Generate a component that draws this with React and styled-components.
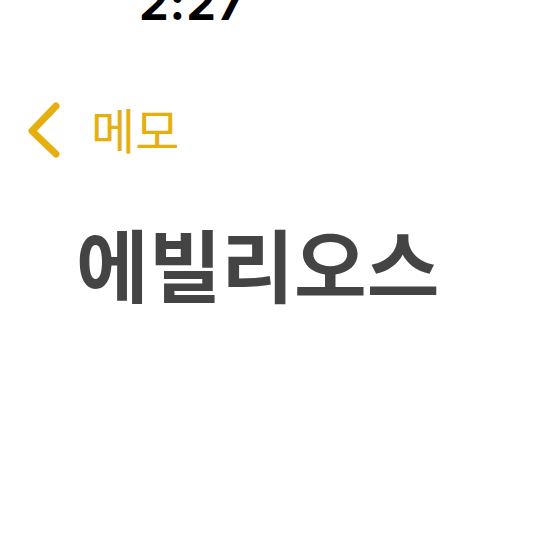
import React from 'react'
import styled, { createGlobalStyle } from 'styled-components'

const Global = createGlobalStyle`
  html, body {
    margin: 0;
    padding: 0;
    background: #fff;
  }
  body {
    font-family: "Noto Sans CJK KR", "Noto Sans", sans-serif;
  }
`

const Screen = styled.div`
  width: 536px;
  height: 536px;
  overflow: hidden;
  background: #fff;
  display: flex;
  flex-direction: column;
`

const StatusBar = styled.div`
  height: 30px;
  display: flex;
  align-items: flex-end;
  overflow: hidden;
  padding-left: 139px;
`

const Time = styled.div`
  font-family: Inter, "Noto Sans", sans-serif;
  font-weight: 700;
  font-size: 47px;
  line-height: 1;
  color: #000;
  margin-bottom: 4px;
  letter-spacing: 1px;
`

const NavBar = styled.div`
  display: flex;
  align-items: center;
  gap: 27px;
  padding: 70px 0 0 26px;
  color: #e5b00f;
`

const BackIcon = styled.svg`
  width: 38px;
  height: 60px;
`

const NavLabel = styled.span`
  font-size: 48px;
  font-weight: 400;
  line-height: 1;
  margin-top: -5px;
`

const Title = styled.h1`
  margin: 63px 0 0 76px;
  font-size: 79px;
  font-weight: 700;
  line-height: 1;
  color: #444;
  letter-spacing: 0;
`

const App = () => (
  <Screen>
    <Global />
    <StatusBar>
      <Time>2:27</Time>
    </StatusBar>
    <NavBar>
      <BackIcon viewBox="0 0 38 60">
        <path
          d="M30 6 L6 31 L30 54"
          fill="none"
          stroke="currentColor"
          strokeWidth="7"
          strokeLinecap="round"
          strokeLinejoin="round"
        />
      </BackIcon>
      <NavLabel>메모</NavLabel>
    </NavBar>
    <Title>에빌리오스</Title>
  </Screen>
)

export default App
